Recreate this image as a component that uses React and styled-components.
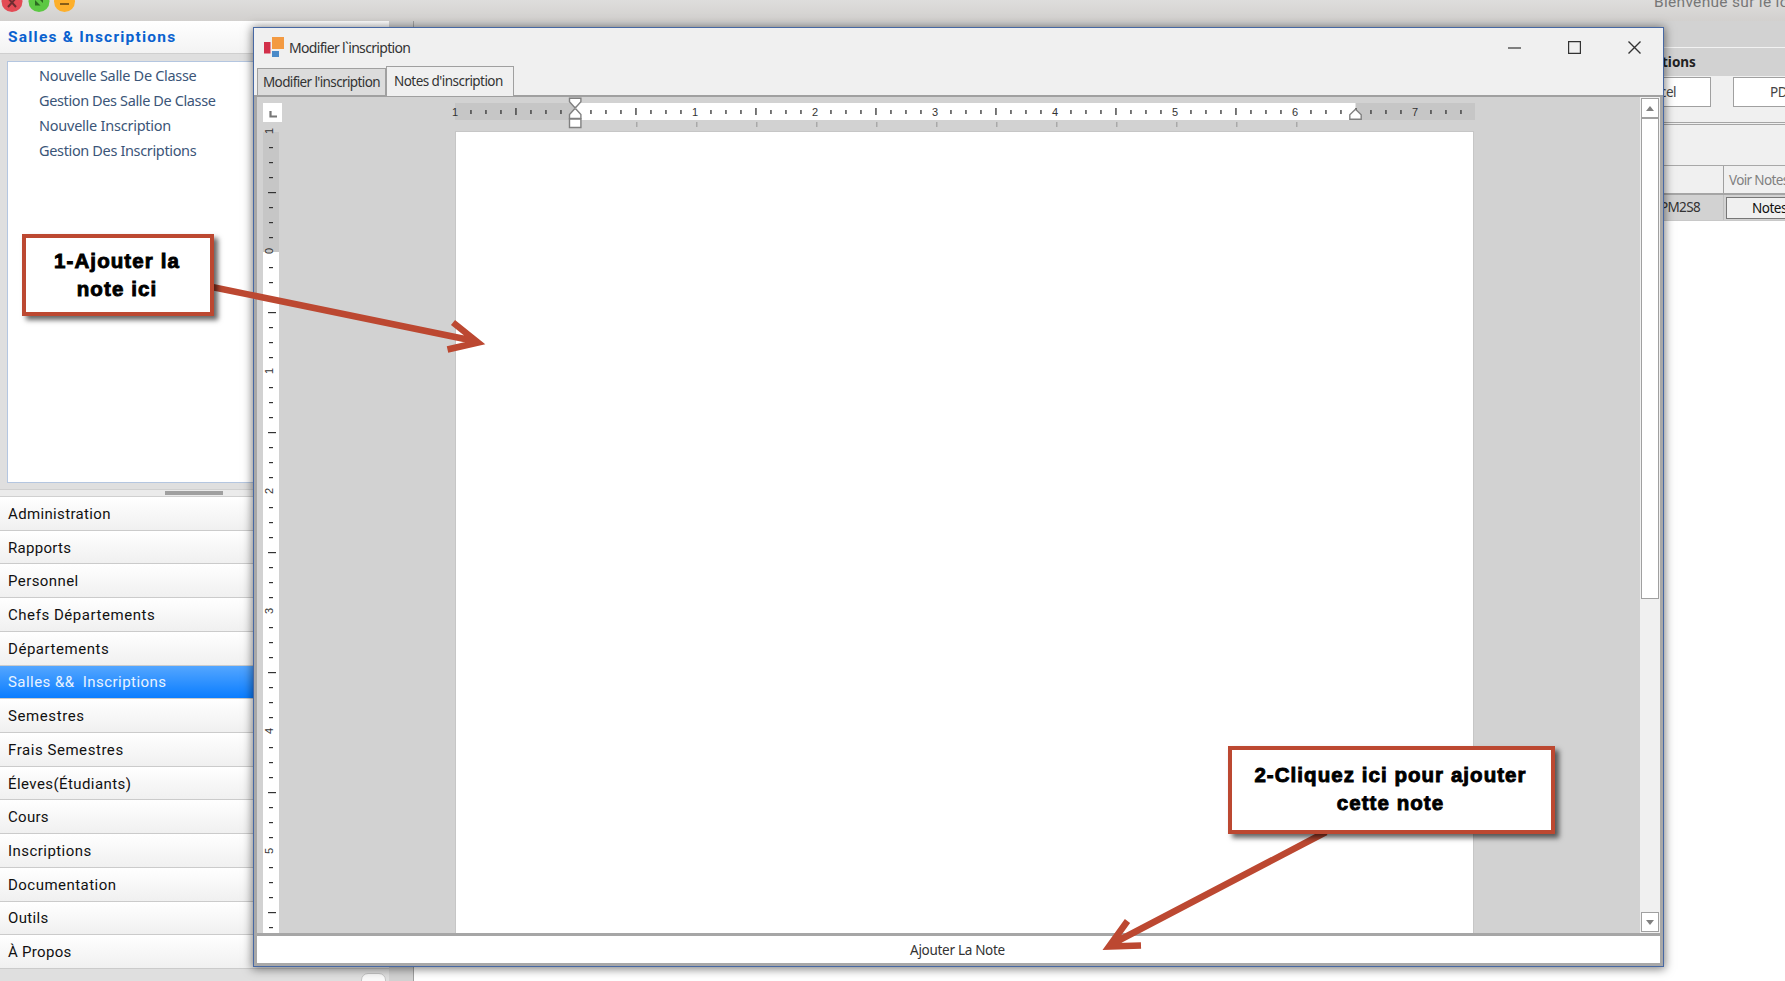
import React from 'react';
import styled, { createGlobalStyle, css } from 'styled-components';

const Global = createGlobalStyle`
  * { box-sizing: border-box; }
  html, body, #root { height: 100%; }
  body { margin: 0; overflow: hidden; }
`;

const Desktop = styled.div`
  position: relative;
  width: 1785px;
  height: 981px;
  overflow: hidden;
  display: flex;
  flex-direction: column;
  background: #fff;
  font-family: 'Noto Sans', 'Open Sans', sans-serif;
  white-space: nowrap;
`;

const MainTitleBar = styled.header`
  flex: 0 0 21px;
  display: flex;
  justify-content: space-between;
  background: linear-gradient(#dedddc, #d2d0ce);
  overflow: hidden;
`;
const Lights = styled.div`
  display: flex;
  gap: 5px;
  padding-left: 1px;
  margin-top: -9px;
`;
const MainCaption = styled.div`
  width: 131px;
  margin-top: -7px;
  color: #777;
  font: 15.5px/19px Roboto, sans-serif;
  letter-spacing: 0.3px;
`;
const Main = styled.div`
  flex: 1;
  display: flex;
  min-height: 0;
`;

const Sidebar = styled.aside`
  flex: 0 0 389px;
  display: flex;
  flex-direction: column;
  background: #dfdfdf;
`;
const SideHeader = styled.div`
  flex: 0 0 33px;
  padding-left: 8px;
  background: linear-gradient(#fff, #f3f3f3);
  border-bottom: 1px solid #cfcfcf;
  color: #0a62cf;
  font: bold 15.5px/32px Roboto, sans-serif;
  letter-spacing: 1.22px;
`;
const LinkBox = styled.div`
  flex: 0 0 422px;
  margin: 7px 0 0 7px;
  padding: 1px 0 0 31px;
  background: #fff;
  border: 1px solid #b4c6e0;
`;
const SideLink = styled.div`
  height: 25px;
  color: #3b5578;
  font-size: 14.5px;
  line-height: 24px;
  letter-spacing: ${(p) => p.$track}px;
`;
const Splitter = styled.div`
  flex: 0 0 8px;
  margin-top: 6px;
  padding: 1px 0 0 165px;
  background: #ebebeb;
  border-top: 1px solid #d0d0d0;
  border-bottom: 1px solid #d0d0d0;
`;
const Grip = styled.div`
  width: 58px;
  height: 4px;
  background: #a0a0a0;
`;
const NavGroups = styled.nav`
  flex: 0 0 472px;
  display: flex;
  flex-direction: column;
`;
const NavGroup = styled.div`
  flex: 1;
  padding: 1px 0 0 8px;
  display: flex;
  align-items: center;
  border-bottom: 1px solid #cbcbcb;
  background: ${(p) => (p.$active ? 'linear-gradient(#54a6ff, #0a7dff)' : 'linear-gradient(#fff, #f0f0f0)')};
  color: ${(p) => (p.$active ? '#e8f3ff' : '#111')};
  font: 15px/30px Roboto, sans-serif;
  letter-spacing: ${(p) => p.$track}px;
  white-space: pre;
`;
const SideFoot = styled.div`
  flex: 1;
  display: flex;
  justify-content: flex-end;
  padding: 4px 3px 0 0;
`;
const FootButton = styled.div`
  width: 25px;
  height: 16px;
  border-radius: 7px;
  background: #fafafa;
  border: 1px solid #c4c4c4;
`;
const Gutter = styled.div`
  flex: 0 0 25px;
  background: #d2d2d2;
  border-right: 1px solid #a0a0a0;
`;

const Records = styled.main`
  flex: 1;
  display: flex;
  flex-direction: column;
  align-items: stretch;
  padding-left: 1239px;
  background: linear-gradient(#d2d2d2 0 100px, #fff 100px);
`;
const RecordsPane = styled.section`
  flex: 1;
  background: #fff;
`;
const RecordsTop = styled.div`
  height: 27px;
  background: #d2d2d2;
  border-bottom: 1px solid #f2f2f2;
`;
const GroupCaption = styled.div`
  height: 28px;
  padding-left: 9px;
  background: #d2d2d2;
  color: #222;
  font: bold 13.5px/28px 'Noto Sans', sans-serif;
`;
const ExportBar = styled.div`
  height: 49px;
  padding-top: 1px;
  display: flex;
  gap: 22px;
  background: #f0f0f0;
  border-bottom: 3px double #a5a5a5;
`;
const ExportButton = styled.div`
  flex: 0 0 ${(p) => p.$w}px;
  height: 30px;
  padding-left: ${(p) => p.$pad}px;
  background: #fff;
  border: 1px solid #a0a0a0;
  color: #444;
  font-size: 13.5px;
  line-height: 28px;
  letter-spacing: -0.5px;
`;
const FilterArea = styled.div`
  height: 41px;
  background: #f0f0f0;
  border-bottom: 1px solid #a8a8a8;
`;
const GridRow = styled.div`
  display: flex;
  height: ${(p) => p.$h}px;
  background: ${(p) => p.$bg};
  border-bottom: ${(p) => p.$line};
`;
const Cell = styled.div`
  flex: ${(p) => (p.$w ? `0 0 ${p.$w}px` : 1)};
  padding-left: ${(p) => p.$pad || 0}px;
  border-right: 1px solid ${(p) => p.$edge || 'transparent'};
  color: ${(p) => p.$color};
  font-size: 13.5px;
  line-height: ${(p) => p.$lh || 27}px;
  letter-spacing: -0.65px;
`;
const RowButton = styled.div`
  flex: 1;
  margin: 2px 0 1px 2px;
  padding-left: 25px;
  border: 1px solid #777;
  background: #f0f0f0;
  color: #111;
  font-size: 13.5px;
  line-height: 20px;
  letter-spacing: -0.5px;
`;

const Dialog = styled.div`
  position: absolute;
  left: 253px;
  top: 27px;
  width: 1411px;
  height: 940px;
  display: flex;
  flex-direction: column;
  background: #f0f0f0;
  border: 1px solid #4768a3;
  box-shadow: 0 1px 9px 1px rgba(0, 0, 0, 0.5);
`;
const DialogTitle = styled.div`
  flex: 0 0 38px;
  display: flex;
  align-items: center;
  padding: 0 22px 0 10px;
`;
const DialogName = styled.div`
  flex: 1;
  margin-left: 5px;
  color: #333;
  font-size: 14px;
  letter-spacing: -0.68px;
`;
const Controls = styled.div`
  display: flex;
  gap: 47px;
`;
const Tabs = styled.div`
  flex: 0 0 31px;
  display: flex;
  align-items: flex-end;
  padding-left: 3px;
  border-bottom: 2px solid #a0a0a0;
`;
const Tab = styled.div`
  width: ${(p) => p.$w}px;
  height: 27px;
  padding-left: 5px;
  background: #dcdcdc;
  border: 1px solid #a0a0a0;
  border-bottom: 0;
  color: #333;
  font-size: 13.5px;
  line-height: 26px;
  letter-spacing: -0.62px;
  ${(p) => p.$active && css`
    height: 30px;
    margin-bottom: -1px;
    padding-left: 7px;
    line-height: 28px;
    background: #f0f0f0;
    letter-spacing: -0.55px;
  `}
`;
const Body = styled.div`
  flex: 1;
  display: flex;
  flex-direction: column;
  min-height: 0;
  border: solid #a8a8a8;
  border-width: 0 3px 3px;
`;
const Editor = styled.div`
  flex: 0 0 836px;
  display: grid;
  grid-template-columns: 198px 1020px 165px 20px;
  background: #d2d2d2;
`;
const LeftColumn = styled.div`
  padding: 6px 0 0 6px;
`;
const CornerBox = styled.div`
  width: 19px;
  height: 19px;
  margin-bottom: 5px;
  background: #fff;
`;
const PageColumn = styled.div`
  display: flex;
  flex-direction: column;
`;
const Paper = styled.div`
  flex: 1;
  width: 1019px;
  background: #fff;
  border: 1px solid #c6c6c6;
  border-bottom: 0;
`;
const Drawing = styled.svg`
  display: block;
  flex: none;
  overflow: visible;
`;
const Scroll = styled.div`
  grid-column: 4;
  display: flex;
  flex-direction: column;
  padding: 1px 1px 1px 1px;
  background: #f0f0f0;
`;
const ScrollButton = styled.div`
  height: 20px;
  flex: none;
  display: flex;
  align-items: center;
  justify-content: center;
  background: #fff;
  border: 1px solid #a0a0a0;
`;
const Thumb = styled.div`
  height: 481px;
  margin-bottom: auto;
  background: #fff;
  border: 1px solid #a0a0a0;
`;
const AddNote = styled.button`
  flex: 1;
  padding: 0 2px 0 0;
  border: 0;
  border-top: 3px solid #a6a6a6;
  background: #fff;
  color: #333;
  font: 13.5px/26px 'Noto Sans', sans-serif;
  letter-spacing: -0.3px;
`;

const Arrows = styled.svg`
  position: absolute;
  inset: 0;
  pointer-events: none;
`;
const Callout = styled.div`
  position: absolute;
  left: ${(p) => p.$x}px;
  top: ${(p) => p.$y}px;
  width: ${(p) => p.$w}px;
  height: ${(p) => p.$h}px;
  padding: ${(p) => p.$pad}px 2px 0 0;
  background: #fff;
  border: 4px solid #bc4831;
  box-shadow: 4px 4px 5px rgba(0, 0, 0, 0.6);
  color: #000;
  text-align: center;
  font: bold 20.5px/28px 'Liberation Sans', Arial, sans-serif;
  -webkit-text-stroke: 0.9px #000;
  letter-spacing: ${(p) => p.$track}px;
`;

const links = [
  ['Nouvelle Salle De Classe', -0.31],
  ['Gestion Des Salle De Classe', -0.38],
  ['Nouvelle Inscription', -0.24],
  ['Gestion Des Inscriptions', -0.35],
];
const groups = [
  ['Administration', 0.35],
  ['Rapports', 0.3],
  ['Personnel', 0.42],
  ['Chefs Départements', 0.55],
  ['Départements', 0.55],
  ['Salles &&  Inscriptions', 0.45],
  ['Semestres', 0.6],
  ['Frais Semestres', 0.55],
  ['Éleves(Étudiants)', 0.42],
  ['Cours', 0.3],
  ['Inscriptions', 0.45],
  ['Documentation', 0.47],
  ['Outils', 0.35],
  ['À Propos', 0.3],
];

function HorizontalRuler() {
  const marks = [];
  for (let k = 1; k < 68; k += 1) {
    const x = k * 15;
    const n = k / 8 - 1;
    if (Number.isInteger(n)) {
      if (n !== 0) marks.push(<text key={k} x={x} y="19" textAnchor="middle">{n}</text>);
    } else {
      const long = k % 4 === 0;
      marks.push(<rect key={k} x={x + 0.3} y={long ? 11 : 13} width="1.3" height={long ? 7 : 4} />);
    }
  }
  const under = [];
  for (let x = 181; x <= 841; x += 60) under.push(<rect key={x} x={x} y="25" width="1.5" height="5" />);
  return (
    <Drawing width="1020" height="34" fill="#333" fontFamily="Liberation Sans, sans-serif" fontSize="11">
      <rect x="0" y="6" width="1020" height="17" fill="#c6c6c6" />
      <rect x="120" y="6" width="780.5" height="17" fill="#fff" />
      <text x="0" y="19" textAnchor="middle">1</text>
      {marks}
      <g fill="#a9a9a9">{under}</g>
      <g fill="#fff" stroke="#808080" strokeWidth="1.4">
        <path d="M114.5 1.2h11.4v3.5l-5 5.5h-1.4l-5-5.5z" />
        <path d="M114.5 21.5v-4l5-5.5h1.4l5 5.5v4z" />
        <path d="M114.5 22h11.4v8.5h-11.4z" />
        <path d="M894.8 22.3v-4.500l5.700-5.500 5.700 5.500v4.500z" />
      </g>
    </Drawing>
  );
}

function VerticalRuler() {
  const marks = [];
  for (let k = 0; k < 54; k += 1) {
    const y = k * 15;
    const n = k / 8 - 1;
    if (Number.isInteger(n)) {
      marks.push(
        <text key={k} transform={`translate(9.7 ${y - 1}) rotate(-90)`} textAnchor="middle">{Math.abs(n)}</text>
      );
    } else {
      const long = k % 4 === 0;
      marks.push(<rect key={k} x={long ? 5 : 6} y={y} width={long ? 8 : 4} height="1.2" />);
    }
  }
  return (
    <Drawing width="16" height="806" fill="#333" fontFamily="Liberation Sans, sans-serif" fontSize="11">
      <rect width="16" height="801" y="5" fill="#fff" />
      <rect width="16" height="120" y="5" fill="#c6c6c6" />
      <g transform="translate(0 5)">{marks}</g>
    </Drawing>
  );
}

export default function App() {
  return (
    <Desktop>
      <Global />
      <MainTitleBar>
        <Lights>
          <Drawing width="76" height="21" strokeWidth="2" fill="none">
            <circle cx="11" cy="10.500" r="10.500" fill="#e34b55" />
            <path d="M7 7l8 9M15 7l-8 9" stroke="#6e2c30" />
            <circle cx="38" cy="10.500" r="10.500" fill="#5cc843" />
            <path d="M34 14.500v-5.500l5.500 5.500zM42 6.500v5.500l-5.500-5.500z" fill="#2c6a21" />
            <circle cx="63.500" cy="10.500" r="10.500" fill="#fdaf2b" />
            <path d="M59 13h9" stroke="#875d18" />
          </Drawing>
        </Lights>
        <MainCaption>Bienvenue sur le lo</MainCaption>
      </MainTitleBar>
      <Main>
        <Sidebar>
          <SideHeader>Salles &amp; Inscriptions</SideHeader>
          <LinkBox>
            {links.map(([label, track]) => <SideLink key={label} $track={track}>{label}</SideLink>)}
          </LinkBox>
          <Splitter><Grip /></Splitter>
          <NavGroups>
            {groups.map(([label, track]) => (
              <NavGroup key={label} $active={label.startsWith('Salles')} $track={track}>{label}</NavGroup>
            ))}
          </NavGroups>
          <SideFoot><FootButton /></SideFoot>
        </Sidebar>
        <Gutter />
        <Records>
          <RecordsPane>
            <RecordsTop />
            <GroupCaption>tions</GroupCaption>
            <ExportBar>
              <ExportButton $w={58} $pad={6}>cel</ExportButton>
              <ExportButton $w={80} $pad={36}>PDF</ExportButton>
            </ExportBar>
            <FilterArea />
            <GridRow $h={29} $bg="#f0f0f0" $line="2px solid #a5a5a5">
              <Cell $w={71} $edge="#a0a0a0" />
              <Cell $pad={5} $lh={28} $color="#808080">Voir Notes</Cell>
            </GridRow>
            <GridRow $h={26} $bg="#d2d2d2" $line="1px solid #c8c8c8">
              <Cell $w={71} $pad={7} $lh={25} $edge="#c0c0c0" $color="#333">PM2S8</Cell>
              <RowButton>Notes</RowButton>
            </GridRow>
          </RecordsPane>
        </Records>
      </Main>

      <Dialog>
        <DialogTitle>
          <Drawing width="20" height="20">
            <rect x="0" y="5" width="6.500" height="11.500" fill="#d2304a" />
            <rect x="8" y="0" width="12" height="12" fill="#f39a42" />
            <rect x="8" y="14" width="7" height="6" fill="#4b8bc9" />
          </Drawing>
          <DialogName>Modifier l`inscription</DialogName>
          <Controls>
            <Drawing width="13" height="13" stroke="#333" fill="none"><path d="M0 7h13" strokeWidth="1.2" /></Drawing>
            <Drawing width="13" height="13" stroke="#333" fill="none"><path d="M.6.6h11.800v11.800H.6z" strokeWidth="1.200" /></Drawing>
            <Drawing width="13" height="13" stroke="#333" fill="none"><path d="M.5.5l12 12M12.500.5l-12 12" strokeWidth="1.400" /></Drawing>
          </Controls>
        </DialogTitle>
        <Tabs>
          <Tab $w={129}>Modifier l'inscription</Tab>
          <Tab $w={128} $active>Notes d'inscription</Tab>
        </Tabs>
        <Body>
          <Editor>
            <LeftColumn>
              <CornerBox>
                <Drawing width="19" height="19"><path d="M7.500 8v5.500H14" fill="none" stroke="#777" strokeWidth="2.200" /></Drawing>
              </CornerBox>
              <VerticalRuler />
            </LeftColumn>
            <PageColumn>
              <HorizontalRuler />
              <Paper />
            </PageColumn>
            <Scroll>
              <ScrollButton><Drawing width="8" height="5"><path d="M0 5L4 0l4 5z" fill="#808080" /></Drawing></ScrollButton>
              <Thumb />
              <ScrollButton><Drawing width="8" height="5"><path d="M0 0h8L4 5z" fill="#808080" /></Drawing></ScrollButton>
            </Scroll>
          </Editor>
          <AddNote>Ajouter La Note</AddNote>
        </Body>
      </Dialog>

      <Arrows width="1785" height="981" fill="none" stroke="#bc4831" strokeWidth="6.500">
        <path d="M212 287L477 341.500M453 322.500L478 342.500L447.500 349.500" strokeMiterlimit="10" />
        <path d="M1326 832L1110 945M1127.500 921L1109 946.500L1141 945.500" strokeMiterlimit="10" />
      </Arrows>
      <Callout $x={22} $y={234} $w={192} $h={82} $pad={9} $track={1.1}>1-Ajouter la<br />note ici</Callout>
      <Callout $x={1228} $y={746} $w={327} $h={88} $pad={11} $track={1.05}>2-Cliquez ici pour ajouter<br />cette note</Callout>
    </Desktop>
  );
}
